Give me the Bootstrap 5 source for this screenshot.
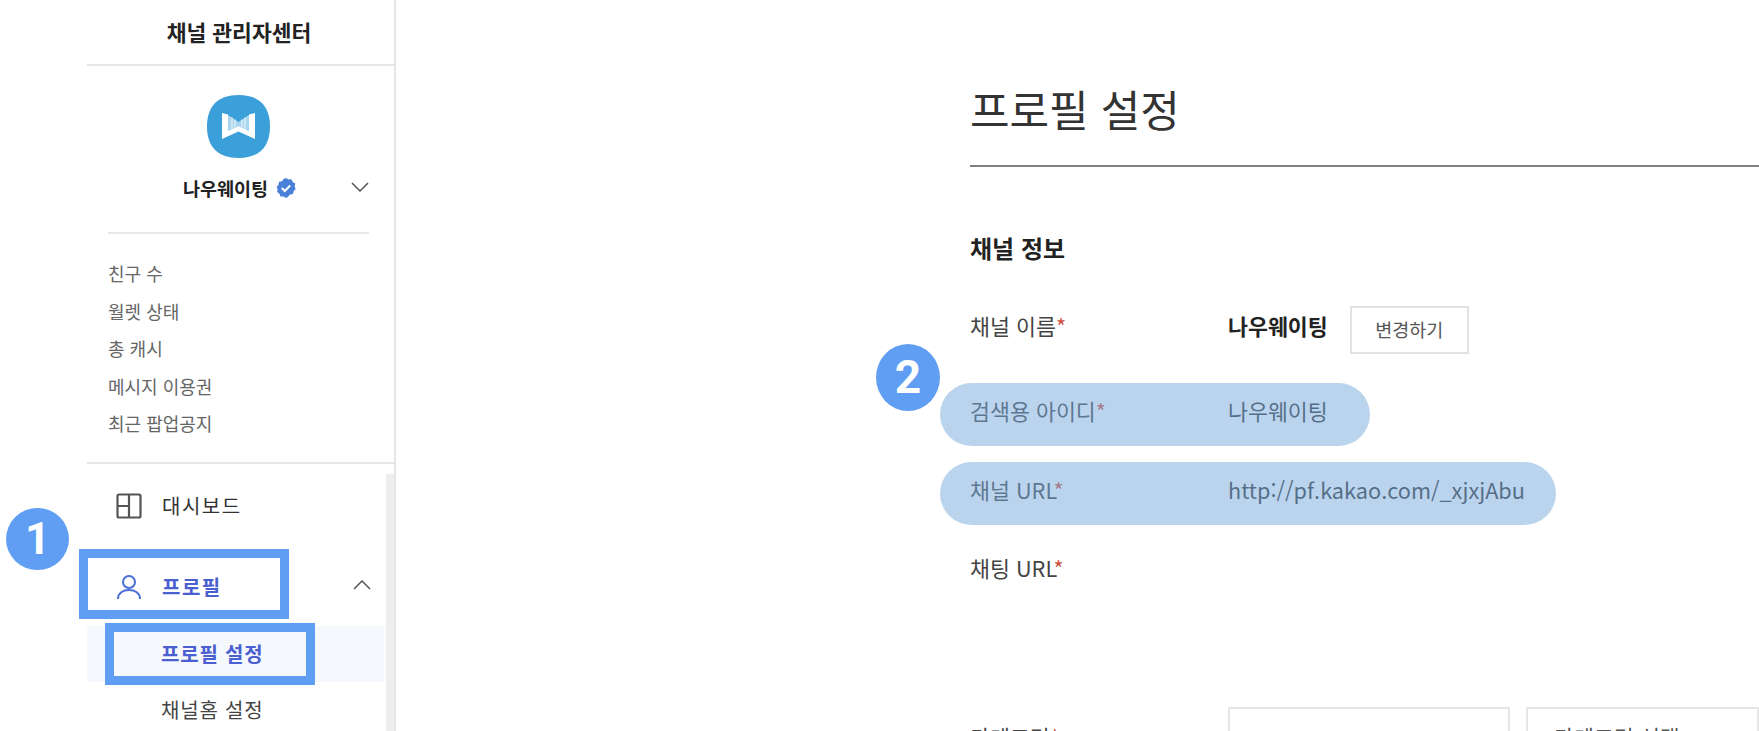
<!DOCTYPE html>
<html lang="ko">
<head>
<meta charset="UTF-8">
<title>채널 관리자센터</title>
<link href="https://cdn.jsdelivr.net/npm/bootstrap@5.3.0/dist/css/bootstrap.min.css" rel="stylesheet">
<script src="https://cdn.jsdelivr.net/npm/bootstrap@5.3.0/dist/js/bootstrap.bundle.min.js"></script>
<style>
  html, body { height: 731px; overflow: hidden; background: #fff; }
  body { font-family: "Noto Sans CJK KR", "Noto Sans", sans-serif; color: #333; position: relative; }

  /* sidebar */
  .side-panel { width: 309px; margin-left: 87px; height: 731px; border-right: 2px solid #e6e6e6; flex: none; position: relative; }
  .side-head { height: 66px; border-bottom: 2px solid #e6e6e6; font-size: 21.500px; font-weight: 700; color: #222; padding-right: 3px; }
  .side-profile { height: 168px; position: relative; margin: 0 25px 0 21px; border-bottom: 2px solid #e9e9e9; padding-top: 29px; }
  .side-logo { width: 63px; height: 63px; display: block; margin: 0 auto 0 99px; }
  .side-name { font-size: 18.500px; font-weight: 700; color: #222; margin: 13px 0 0 75px; gap: 8px; line-height: 34px; }
  .side-chev { position: absolute; right: 0; top: 116px; }
  .side-stats { height: 230px; margin: 0; border-bottom: 2px solid #e6e6e6; padding: 21px 0 0 21px; font-size: 18px; color: #666; line-height: 37.600px; }
  .side-item { padding-left: 29px; gap: 20px; font-size: 20px; letter-spacing: 1.500px; color: #333; margin-right: 9px; position: relative; }
  .side-item-first { height: 83px; }
  .side-item-on { color: #4a5fd0; font-weight: 700; height: 79px; }
  .side-chev-up { position: absolute; right: 14px; top: 33px; }
  .side-sub { height: 56px; padding-left: 74px; font-size: 20px; letter-spacing: .8px; margin-right: 9px; color: #444; }
  .side-sub-on { background: #f5f8fc; color: #4a5fd0; font-weight: 700; }
  .side-track { position: absolute; left: 299px; top: 474px; width: 8px; bottom: 0; background: #eee; }

  /* main */
  .page-main { padding-left: 574px; min-width: 0; }
  .page-title { font-size: 43px; font-weight: 400; color: #333; height: 167px; margin: 0; padding-top: 72px; line-height: 72px; border-bottom: 2px solid #808080; }
  .form-head { font-size: 24px; font-weight: 700; color: #222; margin: 63px 0 40px; line-height: 36px; }
  .form-line { height: 78.500px; font-size: 21.700px; line-height: 40px; }
  .form-line-first { height: 85px; }
  .form-line-gap { height: 159px; }
  .form-key { width: 258px; flex: none; color: #444; }
  .form-key i { color: #d0503f; font-style: normal; }
  .form-key-low { margin-top: 10px; }
  .form-val-strong { font-weight: 700; color: #222; }
  .form-btn { width: 119px; height: 48px; border: 2px solid #e2e2e2; border-radius: 0; background: #fff; font-size: 18.500px; color: #555; padding: 0; margin-left: 22px; }
  .form-box { height: 90px; border: 2px solid #e6e6e6; width: 282px; flex: none; }
  .form-box-two { flex: 1; margin-left: 16px; padding: 8px 26px; color: #555; width: auto; }

  /* annotations laid over the capture */
  .mark-num { position: absolute; border-radius: 50%; background: #5f9ef2; color: #fff; font-weight: 700; font-family: Roboto, sans-serif; }
  .mark-one { left: 6px; top: 508px; width: 63px; height: 62px; font-size: 44px; }
  .mark-two { left: 876px; top: 344px; width: 64px; height: 67px; font-size: 46px; }
  .mark-frame { position: absolute; border: 9px solid #5f9ef2; }
  .frame-one { left: 79px; top: 549px; width: 210px; height: 70px; }
  .frame-two { left: 105px; top: 623px; width: 210px; height: 62px; }
  .mark-pill { position: absolute; border-radius: 32px; background: rgba(120, 170, 220, .5); }
  .pill-one { left: 940px; top: 383px; width: 430px; height: 63px; }
  .pill-two { left: 940px; top: 462px; width: 616px; height: 63px; }
</style>
</head>
<body class="d-flex">
  <aside class="side-panel">
    <div class="side-head d-flex align-items-center justify-content-center">채널 관리자센터</div>
    <div class="side-profile">
      <svg class="side-logo" viewBox="0 0 63 63">
        <path d="M31.500 0C52 0 63 11 63 31.500S52 63 31.500 63 0 52 0 31.500 11 0 31.500 0z" fill="#3b9fd9"/>
        <path d="M21 20l10.500 7L42 20v16l-10.500-5L21 36z" fill="#a9d6ef"/>
        <path d="M25 22.500v12M28 24.500v8M35 24.500v8M38 22.500v12" stroke="#e4f2fa" stroke-width="1.200"/>
        <path d="M15 18l6 1.500V36l10.500-5L42 36V19.500l6-1.500v26l-16.500-7.500L15 44z" fill="#fff"/>
      </svg>
      <div class="side-name d-flex align-items-center">나우웨이팅
        <svg width="20" height="20" viewBox="0 0 20 20">
          <path d="M10 0l2.500 1.500 3-.2 1.200 2.700 2.600 1.500-.6 2.900.9 2.600-2 2.200-.6 2.900-2.900.5L11.800 19l-1.800.9-2.500-1.300-3-.2-1.100-2.700-2.300-1.700.5-2.900L.6 9l1.900-2.300.5-2.900 3-.6L7.500 1z" fill="#4a80d8"/>
          <path d="M5.800 10l3 3 5.400-5.500" fill="none" stroke="#fff" stroke-width="2"/>
        </svg>
      </div>
      <svg class="side-chev" width="18" height="10" viewBox="0 0 18 10"><path d="M1 1l8 8 8-8" fill="none" stroke="#555" stroke-width="1.500"/></svg>
    </div>
    <ul class="side-stats list-unstyled">
      <li>친구 수</li>
      <li>월렛 상태</li>
      <li>총 캐시</li>
      <li>메시지 이용권</li>
      <li>최근 팝업공지</li>
    </ul>
    <nav>
      <div class="side-item side-item-first d-flex align-items-center">
        <svg width="26" height="26" viewBox="0 0 26 26"><rect x="1.500" y="1.500" width="23" height="23" rx="1.500" fill="none" stroke="#555" stroke-width="2.200"/><path d="M13 2v22M2 13h11" fill="none" stroke="#555" stroke-width="2.200"/></svg>
        대시보드
      </div>
      <div class="side-item side-item-on d-flex align-items-center">
        <svg width="26" height="26" viewBox="0 0 26 26"><circle cx="13" cy="8" r="6" fill="none" stroke="#4a6fd8" stroke-width="2"/><path d="M2 25c0-6 5-9 11-9s11 3 11 9" fill="none" stroke="#4a6fd8" stroke-width="2"/></svg>
        프로필
        <svg class="side-chev-up" width="18" height="10" viewBox="0 0 18 10"><path d="M1 9l8-8 8 8" fill="none" stroke="#555" stroke-width="1.500"/></svg>
      </div>
      <div class="side-sub side-sub-on d-flex align-items-center">프로필 설정</div>
      <div class="side-sub d-flex align-items-center">채널홈 설정</div>
    </nav>
    <div class="side-track"></div>
  </aside>

  <main class="page-main flex-grow-1">
    <h1 class="page-title">프로필 설정</h1>
    <h2 class="form-head">채널 정보</h2>
    <div class="form-line form-line-first d-flex">
      <div class="form-key">채널 이름<i>*</i></div>
      <div class="form-val-strong">나우웨이팅</div>
      <button class="form-btn btn" type="button">변경하기</button>
    </div>
    <div class="form-line d-flex">
      <div class="form-key">검색용 아이디<i>*</i></div>
      <div>나우웨이팅</div>
    </div>
    <div class="form-line d-flex">
      <div class="form-key">채널 URL<i>*</i></div>
      <div>http://pf.kakao.com/_xjxjAbu</div>
    </div>
    <div class="form-line form-line-gap d-flex">
      <div class="form-key">채팅 URL<i>*</i></div>
    </div>
    <div class="form-line d-flex">
      <div class="form-key form-key-low">카테고리<i>*</i></div>
      <div class="form-box"></div>
      <div class="form-box form-box-two">카테고리 선택</div>
    </div>
  </main>

  <div class="mark-pill pill-one"></div>
  <div class="mark-pill pill-two"></div>
  <div class="mark-num mark-one d-flex align-items-center justify-content-center">1</div>
  <div class="mark-num mark-two d-flex align-items-center justify-content-center">2</div>
  <div class="mark-frame frame-one"></div>
  <div class="mark-frame frame-two"></div>
</body>
</html>
